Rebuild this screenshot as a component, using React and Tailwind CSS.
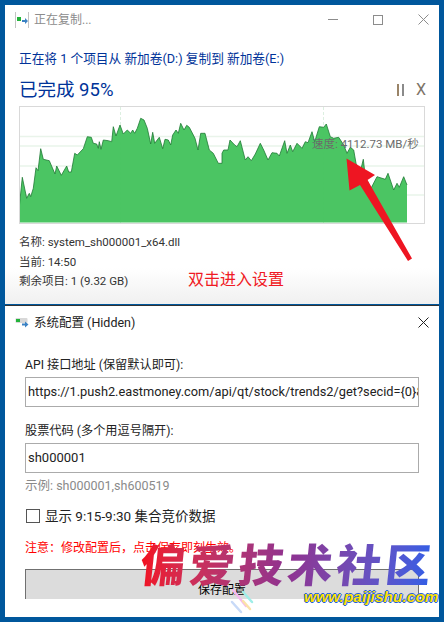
const z3 = [[58,320],[67,232],[80,295],[88,280],[92,290],[100,265],[108,203],[114,212],[122,146],[130,178],[148,182],[165,222],[170,198],[184,226],[200,198],[206,216],[214,216],[224,160],[232,165],[250,146],[262,110],[274,112],[280,130],[290,132],[295,145],[298,125],[303,148],[310,120],[325,122],[335,125],[340,80],[348,108],[360,75],[370,102],[382,90],[392,100],[398,90],[404,100],[412,85],[422,55],[432,60],[442,85],[452,132],[458,97],[464,130],[478,112],[488,146],[495,118],[505,120],[512,135],[518,105],[528,90],[535,100],[542,70],[552,90],[560,76],[568,82],[585,115],[594,150],[602,100],[615,100],[628,150],[640,160],[655,190],[666,190]];
const z4 = [[0,160],[5,150],[18,150],[24,120],[38,135],[45,140],[55,122],[70,180],[78,170],[88,182],[100,162],[115,130],[125,150],[138,180],[150,158],[165,160],[172,168],[188,122],[195,160],[205,135],[212,155],[225,130],[240,145],[250,125],[258,128],[270,95],[278,125],[292,80],[305,82],[313,72],[325,110],[335,115],[350,112],[365,135],[375,160],[385,142],[395,150],[402,190],[415,215],[424,178],[430,230],[447,265],[465,230],[490,238],[498,220],[515,270],[525,250],[532,262],[545,230],[555,255]];
const pts = [...z3.map(([x,y]) => [x/3, 100+y/3]), ...z4.map(([x,y]) => [222+x/3, 100+y/3])];
const line = pts.map(p => p[0].toFixed(1)+","+p[1].toFixed(1)).join(" ");
const area = "19.3,222.5 " + line + " 407,222.5";

const FONT = "font-['Roboto','Noto_Sans_CJK_SC',sans-serif]";

function CopyIcon() {
  return (
    <svg width="14" height="16" viewBox="0 0 14 16" className="shrink-0">
      <path d="M0.5 0V16" stroke="#c4c4c4" />
      <path d="M13.5 0V16" stroke="#c4c4c4" />
      <rect x="2" y="5" width="4" height="4" fill="#22b33a" />
      <path d="M7 8h3V6l3 3-3 3v-2H7z" fill="#3b82c4" />
    </svg>
  );
}

function ConfigIcon() {
  return (
    <svg width="14" height="12" viewBox="0 0 14 12" className="shrink-0">
      <rect x="0.5" y="1" width="12" height="5" rx="1" fill="#d8d8d8" />
      <rect x="1" y="2" width="4" height="3" fill="#22b33a" />
      <path d="M7 6.5h3V4.5l3.5 3-3.5 3v-2H7z" fill="#3b82c4" />
    </svg>
  );
}

function Chart() {
  return (
    <div className="relative h-[118px] w-[406px] border border-[#d9d9d9] bg-white">
      <svg width="404" height="116" viewBox="20 107 404 116" className="block">
        <g stroke="#e9f4ea" strokeWidth="1.5">
          <path d="M20 136.5H424" />
          <path d="M20 146H424" />
          <path d="M20 166H424" />
          <path d="M20 195H424" />
        </g>
        <g stroke="#dcefe0" strokeDasharray="3 2">
          <path d="M120.5 107V223" />
          <path d="M323.5 107V223" />
        </g>
        <polygon points={area} fill="#45c35e" fillOpacity="0.97" />
        <polyline points={line} fill="none" stroke="#1f7a35" strokeWidth="0.8" />
      </svg>
      <span className="absolute left-[292px] top-[29px] text-[11.5px] leading-4 text-[#6b6b6b] whitespace-nowrap">速度: 4112.73 MB/秒</span>
    </div>
  );
}

export default function App() {
  return (
    <div className={`relative h-[622px] w-[444px] overflow-hidden bg-[#00579c] pl-[5px] pr-[5px] pt-[5px] ${FONT}`}>
      {/* copy window */}
      <div className="h-[299px] bg-gradient-to-b from-white from-[88%] to-[#f0f0f0] pl-[14px] pr-[15px]">
        <div className="flex h-[29px] items-center">
          <div className="-ml-[4px] flex items-center gap-[5px]">
            <CopyIcon />
            <span className="text-[12px] leading-4 text-[#8c8c8c]">正在复制...</span>
          </div>
          <div className="ml-auto -mr-[5px] flex items-center gap-[35px]">
            <div className="h-px w-[10px] bg-[#8c8c8c]" />
            <div className="h-[10px] w-[10px] border border-[#8c8c8c]" />
            <svg width="11" height="11" viewBox="0 0 11 11"><path d="M0.5 0.5l10 10M10.5 0.5l-10 10" stroke="#8c8c8c" fill="none" /></svg>
          </div>
        </div>
        <div className="mt-[16px] text-[12.7px] leading-[18px] text-[#003399] whitespace-nowrap">正在将 1 个项目从 新加卷(D:) 复制到 新加卷(E:)</div>
        <div className="mt-[9px] flex h-[26px] items-center">
          <span className="text-[18.5px] leading-[26px] text-[#003399]">已完成 95%</span>
          <div className="ml-auto -mr-[2px] flex items-center gap-[12px] text-[16px] leading-5 text-[#7d7468]">
            <div className="flex gap-[3px]"><div className="h-[12px] w-[2px] bg-[#9a8468]" /><div className="h-[12px] w-[2px] bg-[#8a8a8a]" /></div>
            <span>X</span>
          </div>
        </div>
        <div className="mt-[3px]"><Chart /></div>
        <div className="mt-[9px] text-[11.5px] leading-[19.5px] text-[#333333]">
          <div>名称: system_sh000001_x64.dll</div>
          <div>当前: 14:50</div>
          <div className="flex items-center justify-between">
            <span>剩余项目: 1 (9.32 GB)</span>
            <span className="mr-[140px] -mt-[4px] text-[16px] leading-5 text-[#f01a24]">双击进入设置</span>
          </div>
        </div>
      </div>
      {/* config window */}
      <div className="mt-[1px] h-[312px] border-t border-[#333333] bg-white pl-[20px] pr-[16px]">
        <div className="flex h-[33px] items-center justify-between">
          <div className="-ml-[10px] flex items-center gap-[5px]">
            <ConfigIcon />
            <span className="text-[12.5px] leading-4 text-[#222222]">系统配置 (Hidden)</span>
          </div>
          <svg width="11" height="11" viewBox="0 0 11 11" className="-mr-[6px]"><path d="M0.5 0.5l10 10M10.5 0.5l-10 10" stroke="#222222" fill="none" /></svg>
        </div>
        <div className="mt-[17px] text-[12.2px] leading-[18px] text-[#222222]">API 接口地址 (保留默认即可):</div>
        <div className="mt-[3px] flex h-[30px] w-[394px] items-center overflow-hidden whitespace-nowrap border border-[#ababab] px-[2px] text-[12.8px] leading-5 text-[#222222]">https://1.push2.eastmoney.com/api/qt/stock/trends2/get?secid={"{0}"}&amp;fields1=f1</div>
        <div className="mt-[15px] text-[12.2px] leading-[18px] text-[#222222]">股票代码 (多个用逗号隔开):</div>
        <div className="mt-[3px] flex h-[30px] w-[394px] items-center border border-[#ababab] px-[2px] text-[13px] leading-5 text-[#222222]">sh000001</div>
        <div className="mt-[4px] text-[12.5px] leading-[18px] text-[#8a8a8a]">示例: sh000001,sh600519</div>
        <div className="mt-[12px] flex items-center gap-[5px] pl-px">
          <div className="h-[14px] w-[14px] border border-[#555555]" />
          <span className="text-[13.5px] leading-[18px] text-[#222222]">显示 9:15-9:30 集合竞价数据</span>
        </div>
        <div className="mt-[14px] text-[12px] leading-[18px] text-[#ff0000]">注意：修改配置后，点击保存即刻生效。</div>
        <div className="mt-[12px] flex h-[30px] w-[394px] items-end justify-center border-x border-t border-[#707070] bg-[#dcdcdc] pb-[1px] text-[12px] leading-4 text-black">保存配置</div>
      </div>
      {/* annotation arrow */}
      <svg width="444" height="622" viewBox="0 0 444 622" className="pointer-events-none absolute left-0 top-0">
        <polygon points="346.5,158.5 375,175 367.5,180 412,258.5 408,261 360,185 349.5,190.5" fill="#ee1522" />
        <g strokeWidth="2.5" strokeLinecap="round">
          <path d="M233 590L246 606" stroke="#f5b8ee" />
          <path d="M243 592L252 602" stroke="#9feee8" />
          <path d="M243 601L250 609" stroke="#fbe2a8" />
          <path d="M232 602L241 612" stroke="#c8daf8" />
        </g>
      </svg>
      {/* watermark */}
      <div className="pointer-events-none absolute left-[141px] top-[536px] -skew-x-6 bg-gradient-to-r from-[#f20d1c] via-[#8f3190] to-[#2b5fe8] bg-clip-text font-['Noto_Sans_CJK_SC',sans-serif] text-[45px] font-black leading-[54px] tracking-[4px] text-transparent whitespace-nowrap">偏爱技术社区</div>
      <div className="pointer-events-none absolute left-[304px] top-[588px] font-['Liberation_Sans',sans-serif] text-[15.5px] font-bold italic leading-[18px] text-[#ffe100] [text-shadow:1px_0_#1f5fe0,-1px_0_#1f5fe0,0_1px_#1f5fe0,0_-1px_#1f5fe0] whitespace-nowrap">www.paijishu.com</div>
    </div>
  );
}
